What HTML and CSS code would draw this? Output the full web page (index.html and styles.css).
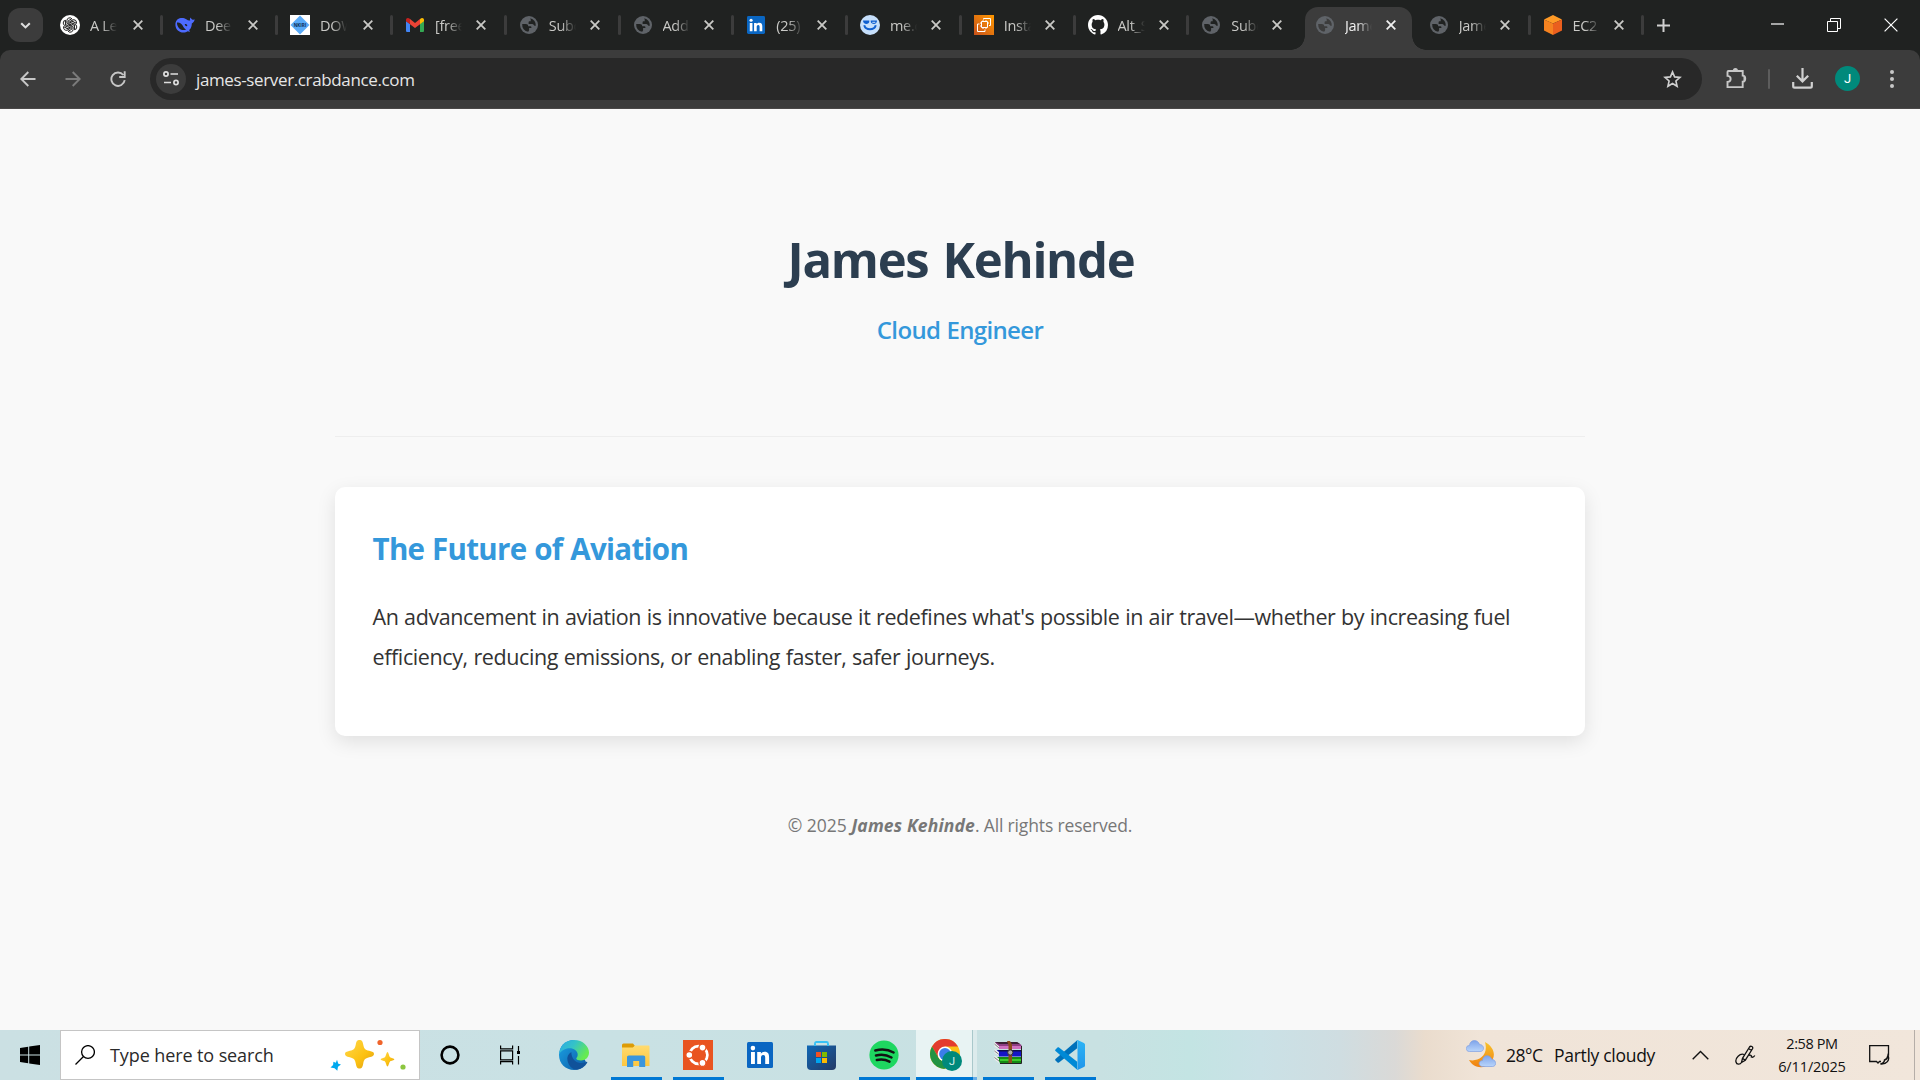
FILE: index.html
```html
<!DOCTYPE html>
<html lang="en">
<head>
<meta charset="utf-8">
<title>James Kehinde</title>
<link rel="stylesheet" href="styles.css">
</head>
<body>
<svg class="defs" width="0" height="0">
  <defs>
    <linearGradient id="edge-blue" x1="0" y1="0" x2="1" y2="1"><stop offset="0" stop-color="#1ba4e6"/><stop offset="1" stop-color="#0c59a4"/></linearGradient>
    <linearGradient id="edge-green" x1="0" y1="0" x2="1" y2="0.5"><stop offset="0" stop-color="#2aa8e8"/><stop offset=".5" stop-color="#35c3c6"/><stop offset="1" stop-color="#66eb50"/></linearGradient>
    <linearGradient id="gold" x1="0" y1="0" x2="1" y2="1"><stop offset="0" stop-color="#ffd84d"/><stop offset=".6" stop-color="#fcc111"/><stop offset="1" stop-color="#d99a1c"/></linearGradient>
    <linearGradient id="aws" x1="0" y1="1" x2="1" y2="0"><stop offset="0" stop-color="#c8511b"/><stop offset="1" stop-color="#ff9900"/></linearGradient>
    <linearGradient id="store" x1="0" y1="0" x2="1" y2="1"><stop offset="0" stop-color="#0f67b5"/><stop offset="1" stop-color="#253a66"/></linearGradient>
    <linearGradient id="folder" x1="0" y1="0" x2="0" y2="1"><stop offset="0" stop-color="#ffdb70"/><stop offset="1" stop-color="#fdc73f"/></linearGradient>
    <linearGradient id="moon" x1="0" y1="0" x2="0" y2="1"><stop offset="0" stop-color="#f8c42c"/><stop offset="1" stop-color="#f08010"/></linearGradient>
    <linearGradient id="cloud" x1="0" y1="0" x2="0" y2="1"><stop offset="0" stop-color="#7ea4ea"/><stop offset="1" stop-color="#b9d5fb"/></linearGradient>
    <linearGradient id="code" x1="0" y1="0" x2="0" y2="1"><stop offset="0" stop-color="#2cb4f6"/><stop offset="1" stop-color="#2095ea"/></linearGradient>
  </defs>
  <symbol id="x" viewBox="0 0 10 10"><path d="M.7.7l8.6 8.6M9.3.7L.7 9.3" stroke="currentColor" stroke-width="1.8"/></symbol>
  <symbol id="globe" viewBox="0 0 18 18"><circle cx="9" cy="9" r="9" fill="#5f6368"/><path d="M10.2 2.2a6.9 6.9 0 0 1 5.6 7.6c-1 .1-1.600-.1-2-.9-.4-.7-1.200-.9-2.100-.9H8.600V6.300c0-.8.5-1.100 1.300-1.100h.8V3.600c0-.5-.3-.8-.5-1.400zM2.200 8.100h3.600c1.500 0 2.400.7 2.400 2.100h2.300c.6 0 .9.4.9 1v.9H9.100v2c0 .6-.4 1-.9 1.600A6.900 6.900 0 0 1 2.200 8.100z" fill="var(--hole)"/></symbol>
</svg>

<header class="browser">
  <div class="tabstrip">
    <button class="tab-search"><svg width="11" height="7" viewBox="0 0 11 7"><path d="M1.200 1.200l4.300 4.200 4.300-4.200" fill="none" stroke="#dedede" stroke-width="2.100"/></svg></button>
    <div class="tabs">
      <div class="tab wide"><span class="fav"><svg width="20" height="20" viewBox="0 0 20 20"><circle cx="10" cy="10" r="10" fill="#fff"/><g fill="none" stroke="#222" stroke-width="1"><path id="petal" d="M10 10.200L6.900 8.400V5.500a2.800 2.800 0 0 1 5.100-1.500M8.200 9.200V5.800l3.500-2"/><use href="#petal" transform="rotate(60 10 10)"/><use href="#petal" transform="rotate(120 10 10)"/><use href="#petal" transform="rotate(180 10 10)"/><use href="#petal" transform="rotate(240 10 10)"/><use href="#petal" transform="rotate(300 10 10)"/></g></svg></span><span class="title">A Lea</span><svg class="close"><use href="#x"/></svg></div>
      <div class="tab wide"><span class="fav"><svg width="20" height="16" viewBox="0 0 20 16"><path d="M19.600 2.300c-1 .7-1.700.4-2.400.1-.9-.4-1.300-1.200-1.500-1.900-.8.8-1.100 2-.4 3-1.500.3-2.800-.2-4-1.200C9.400.9 6.900.6 4.600 1.300 1.500 2.300.1 5 .4 8.300c.4 4.300 3.600 7.300 8 7.300 1.600 0 3.200-.4 4.400-1.300.8.4 1.800.5 2.300.3-.6-.5-.9-1-.9-1.500 1.900-2 2.700-4.300 2.600-6.700 1.500-.6 2.700-2 2.800-4.100z" fill="#4d6bfe"/><path d="M2 5.600c2.600-.4 4.600.9 5.800 3.200.8 1.600 1.800 3.100 3.400 3.800-3 1.200-6.200.2-7.900-2.400-.9-1.400-1.400-3-1.300-4.600zM9.700 7.200c1.300-.7 2.600.3 2.600 1.600-.3.500-1.500.5-2-.2" fill="#202221"/></svg></span><span class="title">Deep</span><svg class="close"><use href="#x"/></svg></div>
      <div class="tab wide"><span class="fav"><svg width="20" height="20" viewBox="0 0 20 20"><path fill="#fff" d="M0 0h20v20H0z"/><path d="M10 .5L19.500 10 10 19.500.5 10z" fill="#59aaf7"/><text x="10" y="12" text-anchor="middle" class="nkiri">NKIRI</text></svg></span><span class="title">DOW</span><svg class="close"><use href="#x"/></svg></div>
      <div class="tab"><span class="fav"><svg width="18" height="14" viewBox="0 0 18 14"><path d="M0 3v9.700C0 13.500.6 14 1.200 14H4V6z" fill="#4285f4"/><path d="M14 6v8h2.800c.7 0 1.200-.6 1.200-1.300V3z" fill="#34a853"/><path d="M14 1.200V6.300l4-3V1.900C18 .2 16.100-.6 14.700.5z" fill="#fbbc04"/><path d="M4 6.300V1.100l5 3.800 5-3.800v5.200l-5 3.800z" fill="#ea4335"/><path d="M0 1.900v1.400l4 3V1.100L3.300.5C1.900-.6 0 .2 0 1.900z" fill="#c5221f"/></svg></span><span class="title">[free</span><svg class="close"><use href="#x"/></svg></div>
      <div class="tab"><span class="fav"><svg width="18" height="18"><use href="#globe"/></svg></span><span class="title">Subd</span><svg class="close"><use href="#x"/></svg></div>
      <div class="tab"><span class="fav"><svg width="18" height="18"><use href="#globe"/></svg></span><span class="title">Add</span><svg class="close"><use href="#x"/></svg></div>
      <div class="tab"><span class="fav"><svg width="18" height="18" viewBox="0 0 26 26"><rect width="26" height="26" rx="2" fill="#0a66c2"/><path d="M4 10h3.900v12H4zM10.200 10h3.700v1.700c.7-1.200 2-2 3.700-2 3.700 0 4.500 2.400 4.500 5.600V22h-3.900v-5.900c0-1.500-.1-3-2-3s-2.200 1.500-2.200 3V22h-3.800z" fill="#fff"/><circle cx="5.900" cy="6.100" r="2.300" fill="#fff"/></svg></span><span class="title">(25)</span><svg class="close"><use href="#x"/></svg></div>
      <div class="tab"><span class="fav"><svg width="20" height="20" viewBox="0 0 20 20"><circle cx="10" cy="10" r="10" fill="#c6dffb"/><path d="M3 5.500h6.300v.8C9.300 8 8 9 6.300 9S3 7.800 3 5.500zM10.700 5.500H17C17 7.800 15.700 9 14 9s-3.300-1-3.300-2.700z" fill="#0f5fd0"/><path d="M4.200 10.200c1.500 5.300 10.100 5.300 11.600 0" fill="none" stroke="#0f5fd0" stroke-width="2"/><path d="M12.300 7.300h3" stroke="#c6dffb"/></svg></span><span class="title">me.c</span><svg class="close"><use href="#x"/></svg></div>
      <div class="tab"><span class="fav"><svg width="20" height="20" viewBox="0 0 20 20"><path fill="url(#aws)" d="M0 0h20v20H0z"/><path d="M7.500 6.500h6v6h-6zM9.500 4.500v-1h7v7h-1.500M5.500 9h-2v7.500h7.500v-2M9 5.200v1M12 5.200v1M9 13v1M12 13v1M6 8h1M6 11h1M14 8h1" fill="none" stroke="#fff" stroke-width="1"/></svg></span><span class="title">Insta</span><svg class="close"><use href="#x"/></svg></div>
      <div class="tab"><span class="fav"><svg width="20" height="20" viewBox="0 0 16 16"><path fill="#fff" d="M8 0C3.580 0 0 3.580 0 8c0 3.540 2.290 6.530 5.470 7.590.4.070.55-.17.55-.38 0-.19-.01-.82-.01-1.490-2.010.37-2.530-.49-2.690-.94-.09-.23-.48-.94-.82-1.130-.28-.15-.68-.52-.01-.53.63-.01 1.080.58 1.230.82.72 1.210 1.870.87 2.330.66.070-.52.28-.87.51-1.070-1.780-.2-3.640-.89-3.640-3.950 0-.87.31-1.590.82-2.150-.08-.2-.36-1.020.08-2.120 0 0 .67-.21 2.200.82.64-.18 1.320-.27 2-.27s1.360.09 2 .27c1.530-1.040 2.200-.82 2.200-.82.44 1.100.16 1.920.08 2.120.51.56.82 1.270.82 2.150 0 3.070-1.870 3.750-3.650 3.950.29.25.54.73.54 1.480 0 1.070-.01 1.930-.01 2.200 0 .21.150.46.55.38A8.010 8.010 0 0 0 16 8c0-4.420-3.580-8-8-8z"/></svg></span><span class="title">Alt_S</span><svg class="close"><use href="#x"/></svg></div>
      <div class="tab plain"><span class="fav"><svg width="18" height="18"><use href="#globe"/></svg></span><span class="title">Subd</span><svg class="close"><use href="#x"/></svg></div>
      <div class="tab active"><span class="fav"><svg width="18" height="18"><use href="#globe"/></svg></span><span class="title">Jame</span><svg class="close"><use href="#x"/></svg></div>
      <div class="tab"><span class="fav"><svg width="18" height="18"><use href="#globe"/></svg></span><span class="title">Jame</span><svg class="close"><use href="#x"/></svg></div>
      <div class="tab"><span class="fav"><svg width="18" height="20" viewBox="0 0 18 20"><path d="M9 0l9 4.500L9 8.500 0 4.500z" fill="#ff9a26"/><path d="M0 4.500l9 4V20l-9-4.500z" fill="#f58220"/><path d="M18 4.500l-9 4V20l9-4.500z" fill="#ea5f1e"/></svg></span><span class="title">EC2 </span><svg class="close"><use href="#x"/></svg></div>
    </div>
    <svg class="new-tab" width="13" height="13" viewBox="0 0 13 13"><path d="M6.500 0v13M0 6.500h13" stroke="#d0d0d0" stroke-width="2"/></svg>
    <div class="window-buttons">
      <span><svg width="13" height="13"><path d="M0 5h13" stroke="#fff" stroke-width="1.200"/></svg></span>
      <span><svg width="14" height="14" fill="none" stroke="#fff"><path d="M.5 3.500h10v10H.5zM3.500 3V.5h10v10H11"/></svg></span>
      <span><svg width="14" height="14" viewBox="0 0 14 14"><path d="M.6.6l12.800 12.800M13.400.6L.6 13.400" stroke="#fff" stroke-width="1.200"/></svg></span>
    </div>
  </div>
  <div class="toolbar">
    <span class="nav"><svg width="16" height="16" viewBox="0 0 16 16"><path d="M15.500 8H1.500M8.300 1L1.300 8l7 7" fill="none" stroke="#c7c7c7" stroke-width="1.900"/></svg></span>
    <span class="nav"><svg width="16" height="16" viewBox="0 0 16 16"><path d="M.5 8h14M7.700 1l7 7-7 7" fill="none" stroke="#7b7b7b" stroke-width="1.900"/></svg></span>
    <span class="nav"><svg width="16" height="16" viewBox="0 0 16 16"><path d="M13.300 4A6.700 6.700 0 1 0 14.700 9.200M14.700.3V6H9.200" fill="none" stroke="#c7c7c7" stroke-width="1.900"/></svg></span>
    <div class="omnibox">
      <span class="site-info"><svg width="16" height="15" viewBox="0 0 16 15" fill="none" stroke="#dedede" stroke-width="1.700"><circle cx="3" cy="3" r="2.100"/><path d="M7.500 3H15M1 11.500h7"/><circle cx="13" cy="11.500" r="2.100"/></svg></span>
      <span class="url">james-server.crabdance.com</span>
      <svg class="star" width="19" height="18" viewBox="0 0 19 18"><path d="M9.500 1.900l2.100 5 5.400.5-4.100 3.600 1.200 5.300-4.600-2.800-4.600 2.800 1.200-5.300L2 7.400l5.400-.5z" fill="none" stroke="#d0d0d0" stroke-width="1.600"/></svg>
    </div>
    <svg class="puzzle" width="21" height="21" viewBox="0 0 21 21"><path d="M2.400 3h14.300v4.600c3.400 0 3.400 6.200 0 6.200v5.300H1.500v-5.200c4.200-.4 4.200-5.600 0-6V3.900c0-.6.300-.9.900-.9z" fill="none" stroke="#c7c7c7" stroke-width="1.900"/><path d="M6.800 3a2.600 2.900 0 0 1 5.200 0zM17.500 8.300a2.700 2.700 0 0 1 0 4.900z" fill="#c7c7c7"/></svg>
    <span class="divider"></span>
    <svg class="download" width="21" height="21" viewBox="0 0 21 21"><path d="M10.500 0v13M4.800 7.700l5.700 5.700 5.700-5.700M1.200 14v4.200c0 .9.500 1.400 1.400 1.400h15.800c.9 0 1.400-.5 1.400-1.400V14" fill="none" stroke="#d0d0d0" stroke-width="2.200"/></svg>
    <span class="avatar">J</span>
    <svg class="menu" width="4" height="18" fill="#c7c7c7"><circle cx="2" cy="2" r="2"/><circle cx="2" cy="9" r="2"/><circle cx="2" cy="16" r="2"/></svg>
  </div>
</header>

<main class="page">
  <div class="container">
    <section class="hero">
      <h1>James Kehinde</h1>
      <p class="role">Cloud Engineer</p>
    </section>
    <article class="card">
      <h2>The Future of Aviation</h2>
      <p>An advancement in aviation is innovative because it redefines what's possible in air travel—whether by increasing fuel efficiency, reducing emissions, or enabling faster, safer journeys.</p>
    </article>
    <footer class="footer">© 2025 <strong>James Kehinde</strong><span>. All rights reserved.</span></footer>
  </div>
</main>

<nav class="taskbar">
  <span class="start"><svg width="20" height="20" viewBox="0 0 20 20"><path d="M0 3l8.200-1.200v7.700H0zM9.200 1.600L20 0v9.500H9.200zM0 10.500h8.200v7.700L0 17zM9.200 10.500H20V20L9.200 18.400z"/></svg></span>
  <div class="search">
    <svg width="20" height="20" viewBox="0 0 20 20"><circle cx="13" cy="7" r="6.400" fill="none" stroke="#000" stroke-width="1.300"/><path d="M8.500 11.500L.5 19.500" stroke="#000" stroke-width="1.300"/></svg>
    <span class="search-text">Type here to search</span>
    <svg class="sparkles" width="77" height="32" viewBox="0 0 77 32"><path d="M29.500 1c2.300 0 3 1 3.700 4.500.8 4 1.600 5.200 6 6.300 3.500.9 4.800 1.500 4.800 3.200s-1.300 2.500-4.800 3.300c-4.400 1.100-5.200 2.400-6 6.400-.7 3.500-1.400 4.800-3.700 4.800s-3-1.300-3.700-4.800c-.8-4-1.600-5.300-6-6.400-3.500-.8-4.800-1.600-4.800-3.300s1.300-2.300 4.800-3.200c4.400-1.100 5.200-2.300 6-6.300C26.500 2 27.200 1 29.500 1z" fill="url(#gold)"/><path d="M57.500 13c1 0 1.600 4.500 2.600 5.200 1 .7 4.200 1 4.200 2.100s-3.200 1.400-4.200 2.100c-1 .8-1.600 5-2.600 5s-1.600-4.200-2.600-5c-1-.7-4.200-1-4.200-2.100s3.200-1.400 4.200-2.100c1-.7 1.600-5.200 2.600-5.200z" fill="url(#gold)"/><path d="M7 20.800l1.300 4 2.700.6-3 2.300-.7 4.100-2.700-2.500-4.100-.8 2.600-2.400.3-3.400 2.400 1.100z" fill="#00a9ef"/><circle cx="50" cy="3.500" r="2.600" fill="#f0642b"/><circle cx="73" cy="28" r="2.600" fill="#8cc63f"/></svg>
  </div>
  <span class="cortana"><svg width="20" height="20"><circle cx="10" cy="10" r="8.400" fill="none" stroke="#000" stroke-width="2.600"/></svg></span>
  <span class="taskview"><svg width="20" height="20" fill="none" stroke="#000" stroke-width="1.200"><path d="M.6.500v3.300h12V.5M.6 5.800h12v9H.6zM.6 19.500v-2.800h12v2.800M18.500 1v5M18.500 11v8.500"/><path d="M17 6h3v3h-3z" fill="#000" stroke="none"/></svg></span>
  <div class="apps">
    <span class="app"><svg width="30" height="30" viewBox="0 0 30 30"><path d="M15 0C6 0 0 6.500 0 15s6.500 15 15 15c3 0 6-1 8.500-2.500L27 22z" fill="url(#edge-blue)"/><path d="M1 10C3 3.500 8.500 0 15 0c9 0 15 6.500 15 12.500 0 5-3.800 8-8 8-2.600 0-4.800-.7-4.800-2 0-.8 1.500-1.300 1.500-3.800 0-4-4-6.500-8-6.500C7 8.200 3.500 9.500 0 14z" fill="url(#edge-green)"/><path d="M12.300 12C9 14 7.800 17.300 8.500 20.500c1 5 4.500 9 9.500 9.300 4-.5 8-3 10.200-7 .3-.8-.3-1.200-.9-.8C22 24.800 12.500 22.500 12.300 12z" fill="#10529a"/></svg></span>
    <span class="app open"><svg width="28" height="24" viewBox="0 0 28 24"><path d="M0 2a1.500 1.500 0 0 1 1.500-1.500h9.500L13 3l-2 2H0z" fill="#dd9b05"/><path d="M0 4.500h11l2-2h13.500c.8 0 1 .4 1 1V23H0z" fill="url(#folder)"/><path d="M5 24V14.500c0-1.200.7-1.900 1.900-1.900h14.400c1.200 0 1.900.7 1.900 1.900V24h-6v-6h-6v6z" fill="#3a96dc"/></svg></span>
    <span class="app open"><svg width="30" height="30" viewBox="0 0 30 30"><path fill="#e95420" d="M0 0h30v30H0z"/><circle cx="15.500" cy="15" r="8.900" fill="none" stroke="#fff" stroke-width="2.700"/><g fill="#fff" stroke="#e95420" stroke-width="1.400"><circle cx="6.300" cy="15" r="3.500"/><circle cx="19.500" cy="7.600" r="3.500"/><circle cx="19.500" cy="22.900" r="3.500"/></g></svg></span>
    <span class="app"><svg width="26" height="26" viewBox="0 0 26 26"><rect width="26" height="26" rx="1.500" fill="#0a66c2"/><path d="M4 10h3.900v12H4zM10.200 10h3.700v1.700c.7-1.200 2-2 3.700-2 3.700 0 4.500 2.400 4.500 5.600V22h-3.900v-5.900c0-1.500-.1-3-2-3s-2.200 1.500-2.200 3V22h-3.800z" fill="#fff"/><circle cx="5.900" cy="6.100" r="2.300" fill="#fff"/></svg></span>
    <span class="app store"><svg width="29" height="29" viewBox="0 0 29 29"><path d="M8 5V2.500C8 1.500 8.500 1 9.500 1h10c1 0 1.500.5 1.500 1.500V5" fill="none" stroke="#38c1f5" stroke-width="1.800"/><path d="M0 4.500h29V25a4 4 0 0 1-4 4H4a4 4 0 0 1-4-4z" fill="url(#store)"/><path d="M8 5V3M21 5V3" stroke="#38c1f5" stroke-width="1.800"/><path fill="#f25022" d="M9 11h5v5H9z"/><path fill="#7fba00" d="M15 11h5v5h-5z"/><path fill="#00a4ef" d="M9 17h5v5H9z"/><path fill="#ffb900" d="M15 17h5v5h-5z"/></svg></span>
    <span class="app open"><svg width="30" height="30" viewBox="0 0 30 30"><circle cx="15" cy="15" r="14.600" fill="#1ed760"/><path d="M6.300 10.500c6.500-1.700 13-1 18.300 2M7 15.500c5.500-1.400 10.800-.7 15.500 2M7.800 20c4.700-1 8.800-.5 12.700 1.700" fill="none" stroke="#121212" stroke-width="2.500" stroke-linecap="round"/></svg></span>
    <span class="app open current"><svg width="32" height="32" viewBox="0 0 32 32"><circle cx="15" cy="15" r="15" fill="#fbc116"/><path d="M2 7.500A15 15 0 0 1 28 7.500H15L8.500 18.700z" fill="#e33b2e"/><path d="M2 7.500L8.500 18.700C11 22.500 14 22.500 18 22L14.500 30A15 15 0 0 1 2 7.500z" fill="#229342"/><circle cx="15" cy="15" r="7.400" fill="#fff"/><circle cx="15" cy="15" r="5.900" fill="#3b7de9"/><circle cx="22" cy="22" r="10" fill="#00897b"/><text x="22" y="26" text-anchor="middle" class="badge-letter">J</text></svg></span>
    <span class="app open"><svg class="winrar" width="28" height="23" viewBox="0 0 28 23"><path d="M1 1h22l4.500 3v4H5z" fill="#8d3d83"/><path d="M1 1h22l3 2H5z" fill="#3c2035"/><path d="M5 5h22.500v3H5z" fill="#cf6fc0"/><path d="M3 9h24.500v6.500H5z" fill="#1414c8"/><path d="M4 9h23v1.500H5z" fill="#101050"/><path d="M3 16h24.500v6H6z" fill="#148a14"/><path d="M6 18h21.500v2H6z" fill="#3ccb2c"/><path d="M0 1l5 4v3.500L.500 5.500zM.5 8l4.500 3v4L.500 12zM.5 14.500l4.500 3V22l-4.500-3.500z" fill="#eee"/><path d="M.5 3l4.500 4M.5 10l4.500 3.500M.500 16.500L5 20" stroke="#555" stroke-width=".7"/><path d="M13 0h3l2 3.500V22h-3.500V4z" fill="#8c4a1c"/><circle cx="16.300" cy="11.500" r="2.600" fill="#aaa" stroke="#333"/><path d="M6 22.500h21.500V5" fill="none" stroke="#222" stroke-width="1"/></svg></span>
    <span class="app open"><svg width="30" height="30" viewBox="0 0 30 30"><path d="M22.200.2v8L4 22.500c-.5.400-1 .4-1.500 0L.5 20.600c-.5-.5-.5-1.200 0-1.700z" fill="#0071ba"/><path d="M22.200 29.800v-8L4 7.500c-.5-.4-1-.4-1.500 0L.5 9.400c-.5.500-.5 1.200 0 1.700z" fill="#0089d6"/><path d="M21.500 29.800c.5.2 1.100.2 1.600 0l5.800-2.800c.7-.3 1.100-.9 1.100-1.600V4.600c0-.7-.4-1.300-1.100-1.600L23.100.2c-.5-.3-1.100-.2-1.600.1.600-.1 1 .3 1 1.200v27c0 .8-.4 1.400-1 1.300z" fill="url(#code)"/></svg></span>
  </div>
  <div class="tray">
    <svg class="weather" width="30" height="29" viewBox="0 0 30 29"><path d="M19 2c9 5 12 14 5 21-5 6-16 6-21-3C12 22 23 16 19 2z" fill="url(#moon)"/><path d="M3.500 11.500C-1 11.500-1 5.500 3.500 5.500 4-1 12-1 13.500 4.500c5 0 5.500 7 .5 7z" fill="url(#cloud)" stroke="#7f9fe2" stroke-width=".7"/><path d="M16.500 26.500c-4.500 0-4.500-6 0-6 .5-6.500 8-6 9.500-1 4.500 0 5 7 .5 7z" fill="url(#cloud)" stroke="#7f9fe2" stroke-width=".7"/></svg>
    <span class="temp">28°C</span>
    <span class="sky">Partly cloudy</span>
    <svg class="chevron" width="17" height="10" viewBox="0 0 17 10"><path d="M.7 9.300l7.800-7.800 7.800 7.800" fill="none" stroke="#111" stroke-width="1.400"/></svg>
    <svg class="pen" width="21" height="21" viewBox="0 0 21 21"><path d="M6.500 17.500l1-4.200L14.500 2c1.300-1.700 4-.2 3 1.800L10.300 15.200zM13.500 3.500l3 2M7.500 13.300l2.800 1.900M9 9.500c-4-1.500-9 3.500-8 7.500.6 2.700 4 3 5.500.5M14 10.500c2-1.200 2.800.500 2.300 1.500 1 .5 2.500.2 3.500-1.500" fill="none" stroke="#111" stroke-width="1.300"/></svg>
    <div class="clock"><span class="time">2:58 PM</span><span class="date">6/11/2025</span></div>
    <svg class="notify" width="21" height="20" viewBox="0 0 21 20"><path d="M12 16.500h-1.500L9 18l-1.500-1.500H.7V.7h18.800v10" fill="none" stroke="#111" stroke-width="1.300"/><path d="M19 10.500c2 4.500-1 9-7.500 8.500 3-1 4-2 4-4 2-.5 3-2 3.500-4.500z" fill="none" stroke="#111" stroke-width="1.400"/></svg>
    <span class="show-desktop"></span>
  </div>
</nav>
</body>
</html>
```
FILE: styles.css
```css
* { box-sizing: border-box; }

body {
  margin: 0;
  width: 1920px;
  height: 1080px;
  overflow: hidden;
  display: flex;
  flex-direction: column;
  background: #f9f9f9;
  font-family: "Open Sans", "Noto Sans", sans-serif;
}

svg { display: block; flex: none; }
.defs { position: absolute; }

/* Browser window */
.browser { height: 109px; flex: none; background: #202221; }

.tabstrip { height: 50px; display: flex; align-items: center; padding-left: 8px; }

.tab-search {
  width: 35px;
  height: 34px;
  padding: 0;
  border: 0;
  border-radius: 12px;
  background: #3c3c3c;
  display: grid;
  place-items: center;
}

.tabs { display: flex; height: 50px; margin-left: 3.500px; }

.tab {
  --hole: #202221;
  position: relative;
  width: 113.750px;
  height: 50px;
  display: flex;
  align-items: center;
  color: #c9c9c6;
}
.tab.wide { width: 115px; }

.tab::after {
  content: "";
  position: absolute;
  right: -1.500px;
  top: 15px;
  width: 3px;
  height: 20px;
  border-radius: 2px;
  background: #3c3c3c;
}
.tab.plain::after { display: none; }

.fav { width: 20px; height: 20px; margin-left: 13.500px; display: grid; place-items: center; }

.title {
  width: 27px;
  height: 24px;
  margin-left: 10px;
  padding-top: 1px;
  overflow: hidden;
  white-space: nowrap;
  font-size: 14.500px;
  line-height: 24px;
  letter-spacing: -.3px;
  -webkit-mask-image: linear-gradient(90deg, #000 45%, transparent);
  mask-image: linear-gradient(90deg, #000 45%, transparent);
}

.close { width: 10px; height: 10px; margin-left: 14px; }
.wide .close { margin-left: 15.500px; }

.tab.active { --hole: #3c3c3c; color: #f0f0f0; }
.tab.active > * { z-index: 1; }
.tab.active::before {
  content: "";
  position: absolute;
  left: 3px;
  top: 7px;
  width: 107px;
  height: 43px;
  border-radius: 13px 13px 0 0;
  background: #3c3c3c;
}
.tab.active::after {
  left: -11px;
  right: auto;
  top: 36px;
  width: 135px;
  height: 14px;
  border-radius: 0;
  background:
    radial-gradient(circle at 0 0, transparent 13.500px, #3c3c3c 14px) left / 14px 14px no-repeat,
    radial-gradient(circle at 100% 0, transparent 13.500px, #3c3c3c 14px) right / 14px 14px no-repeat;
}

.new-tab { margin-left: 14px; }

.window-buttons { display: flex; margin: 0 1px 0 auto; }
.window-buttons span { width: 57px; height: 50px; display: grid; place-items: center; }
.window-buttons span:first-child { width: 56px; }

.toolbar {
  height: 59px;
  display: flex;
  align-items: center;
  padding: 0 26px 1px 5px;
  background: #3c3c3c;
  border-bottom: 1px solid #4a4848;
  border-radius: 10px 10px 0 0;
}

.nav { width: 45px; height: 40px; display: grid; place-items: center; }

.omnibox {
  width: 1552px;
  height: 42px;
  margin-left: 10px;
  padding: 0 20px 0 6px;
  display: flex;
  align-items: center;
  border-radius: 21px;
  background: #282828;
}

.site-info {
  width: 30px;
  height: 30px;
  border-radius: 50%;
  background: #3c3c3c;
  display: grid;
  place-items: center;
}

.url { margin-left: 10px; font-size: 17px; line-height: 24px; letter-spacing: -.37px; color: #e6e6e6; padding-top: 2px; }
.star { margin-left: auto; }
.puzzle { margin-left: 24px; }
.divider { width: 2px; height: 20px; margin-left: 20.500px; background: #5d5d5d; border-radius: 1px; }
.download { margin-left: 22.500px; }

.avatar {
  width: 25px;
  height: 25px;
  margin-left: 22px;
  border-radius: 50%;
  background: #00897b;
  color: #fff;
  font: 13px/25px Roboto, sans-serif;
  text-align: center;
}
.menu { margin-left: auto; }

.nkiri { font: bold 4.500px "Open Sans", sans-serif; fill: #0b2b55; }
.badge-letter { font: 11px Roboto, sans-serif; fill: #d7f0ec; }

/* Web page */
.page { flex: 1; display: flex; justify-content: center; background: #f9f9f9; }
.container { width: 1250px; }

.hero {
  height: 328px;
  padding-top: 120px;
  border-bottom: 1px solid #eee;
  text-align: center;
}
.hero h1 { margin: 0 0 26px; padding-left: 2px; font-size: 49px; line-height: 60px; letter-spacing: -1.250px; word-spacing: 2.500px; font-weight: 700; color: #2c3e50; }
.role { margin: 0; font-size: 24px; line-height: 30px; letter-spacing: -.64px; word-spacing: .5px; font-weight: 600; color: #3498db; }

.card {
  height: 249px;
  margin-top: 50px;
  padding: 42px 37.500px 0;
  border-radius: 10px;
  background: #fff;
  box-shadow: 0 6px 19px rgba(0, 0, 0, .1);
}
.card h2 { margin: 0 0 28px; font-size: 29.500px; line-height: 40px; letter-spacing: -.7px; word-spacing: .8px; color: #3498db; }
.card p { margin: 0; font-size: 21.500px; line-height: 40px; letter-spacing: -.39px; word-spacing: .4px; color: #333; }

.footer { margin-top: 74px; font-size: 17.500px; line-height: 30px; color: #777; text-align: center; }
.footer strong { font-style: italic; letter-spacing: .15px; }
.footer span { letter-spacing: -.15px; }

/* Taskbar */
.taskbar {
  height: 50px;
  flex: none;
  display: flex;
  align-items: center;
  background: linear-gradient(90deg, #cbe0e3 0, #c9e1e4 600px, #c8e1e2 1100px, #c3e4e3 1190px, #cae1e6 1260px, #cfdde1 1340px, #dad9d7 1395px, #eadccd 1425px, #f0e4d8 1480px, #f1e6db 1920px);
}

.start { width: 60px; padding-left: 20px; }

.search {
  width: 360px;
  height: 50px;
  padding: 0 12px 0 14px;
  display: flex;
  align-items: center;
  background: #fff;
  border: 1px solid #c5c5c5;
}
.search-text { margin-left: 15px; font-size: 18px; letter-spacing: -.1px; color: #2a2a2a; }
.sparkles { margin-left: auto; }

.cortana { width: 60px; padding-left: 20px; }
.taskview { width: 63px; padding-left: 20px; }

.apps { display: flex; height: 50px; }
.app { position: relative; width: 62px; display: grid; place-items: center; }
.app.store { padding-right: 2px; }
.app.open::after {
  content: "";
  position: absolute;
  left: 6px;
  bottom: 0;
  width: 51px;
  height: 3px;
  background: #0078d4;
}
.app.current {
  background: linear-gradient(90deg, transparent 1px, #e8f3f3 1px 57px, #a9c8cb 57px 58px, #dcebec 58px);
}
.app.current::after { left: 1px; width: 61px; background: linear-gradient(90deg, #0078d4 57px, #6aaee6 57px); }
.app .winrar { margin-bottom: 5px; }

.tray { margin-left: auto; height: 50px; display: flex; align-items: center; color: #111; }
.weather { margin-bottom: 2px; }
.temp { width: 37px; margin-left: 10px; font-size: 17.500px; letter-spacing: -.5px; }
.sky { width: 101px; margin-left: 11px; font-size: 17.500px; letter-spacing: -.3px; white-space: nowrap; }
.chevron { margin-left: 36.500px; }
.pen { margin-left: 26px; }
.clock { width: 70px; margin-left: 21.500px; display: flex; flex-direction: column; align-items: center; font-size: 14.500px; line-height: 23px; }
.time { letter-spacing: -.4px; }
.date { letter-spacing: -.12px; }
.notify { margin-left: 22px; }
.show-desktop { width: 6px; height: 50px; margin-left: 24px; border-left: 1px solid #b5aea8; }
```
